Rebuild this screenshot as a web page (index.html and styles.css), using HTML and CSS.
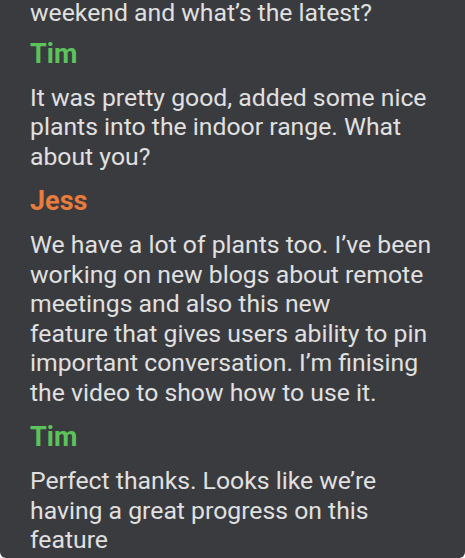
FILE: index.html
```html
<!DOCTYPE html>
<html lang="en">
<head>
<meta charset="utf-8">
<link rel="stylesheet" href="styles.css">
</head>
<body>
<div class="chat">
  <p class="msg msg-first">weekend and what’s the latest?</p>
  <h3 class="name name-tim">Tim</h3>
  <p class="msg">It was pretty good, added some nice plants into the indoor range. What about you?</p>
  <h3 class="name name-jess">Jess</h3>
  <p class="msg">We have a lot of plants too. I’ve been working on new blogs about remote meetings and also this new<br>feature that gives users ability to pin important conversation. I’m finising the video to show how to use it.</p>
  <h3 class="name name-tim">Tim</h3>
  <p class="msg">Perfect thanks. Looks like we’re having a great progress on this feature</p>
</div>
</body>
</html>
```

FILE: styles.css
```css
html, body {
  margin: 0;
  padding: 0;
  background: #ffffff;
}
.chat {
  box-sizing: border-box;
  width: 465px;
  height: 558px;
  overflow: hidden;
  background: #3a3b3f;
  border-radius: 0 0 6px 6px;
  padding: 0 20px 0 30px;
  font-family: Roboto, "Noto Sans", sans-serif;
}
.msg {
  margin: 0 0 14px;
  font-size: 24.75px;
  line-height: 29.5px;
  color: #e0e0e0;
}
.msg-first {
  margin-top: -2px;
  margin-bottom: 10px;
}
.name {
  margin: 0 0 13px;
  font-size: 27px;
  line-height: 32px;
  font-weight: 700;
}
.name-tim { color: #5cc35c; }
.name-jess { color: #e97c3c; }
```
